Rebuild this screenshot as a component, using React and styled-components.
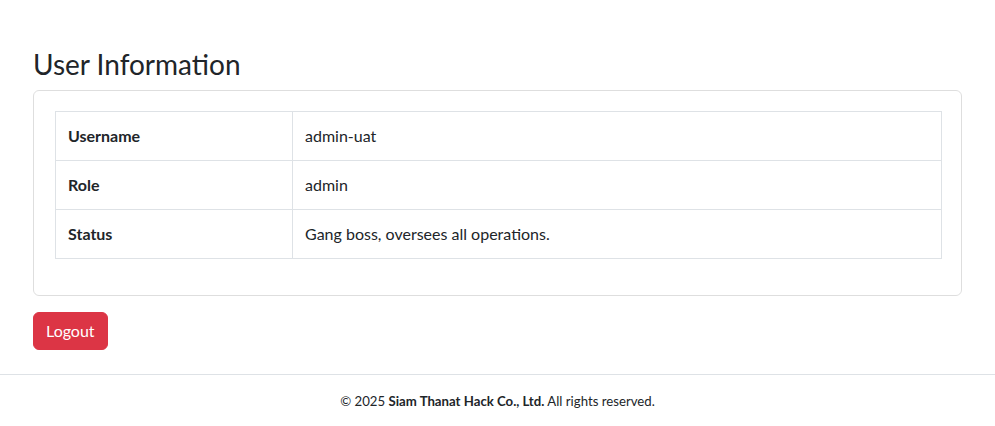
import React from 'react';
import styled, { createGlobalStyle } from 'styled-components';

const GlobalStyle = createGlobalStyle`
  * { box-sizing: border-box; }
  body {
    margin: 0;
    font-family: Lato, 'Noto Sans', sans-serif;
    font-size: 16px;
    line-height: 1.5;
    color: #212529;
    background: #fff;
  }
`;

const Page = styled.div`
  min-height: 100vh;
  display: flex;
  flex-direction: column;
`;

const Container = styled.main`
  padding: 48px 33px 0;
`;

const Title = styled.h3`
  margin: 0 0 8px;
  font-size: 28px;
  font-weight: 400;
  line-height: 1.2;
`;

const Card = styled.div`
  border: 1px solid rgba(0, 0, 0, 0.13);
  border-radius: 6px;
  padding: 20px 19px 20px 21px;
`;

const Table = styled.table`
  width: 100%;
  border-collapse: collapse;
  margin-bottom: 16px;
`;

const Row = styled.tr``;

const Cell = styled.td`
  border: 1px solid #dee2e6;
  padding: 12px;
  text-align: left;
  vertical-align: top;
  font-weight: ${(p) => (p.$head ? 700 : 400)};
  width: ${(p) => (p.$head ? '237px' : 'auto')};
`;

const LogoutButton = styled.button`
  margin-top: 16px;
  font-family: inherit;
  font-size: 16px;
  line-height: 24px;
  padding: 6px 12px;
  color: #fff;
  background: #dc3545;
  border: 1px solid #dc3545;
  border-radius: 6px;
  cursor: pointer;
`;

const Footer = styled.footer`
  margin-top: 24px;
  border-top: 1px solid #dee2e6;
  padding: 16px 0;
  text-align: center;
  font-size: 13.2px;
  line-height: 21px;
`;

const rows = [
  ['Username', 'admin-uat'],
  ['Role', 'admin'],
  ['Status', 'Gang boss, oversees all operations.'],
];

const App = () => {
  return (
    <Page>
      <GlobalStyle />
      <Container>
        <Title>User Information</Title>
        <Card>
          <Table>
            <tbody>
              {rows.map(([k, v]) => (
                <Row key={k}>
                  <Cell as="th" $head>{k}</Cell>
                  <Cell>{v}</Cell>
                </Row>
              ))}
            </tbody>
          </Table>
        </Card>
        <LogoutButton>Logout</LogoutButton>
      </Container>
      <Footer>
        © 2025 <strong>Siam Thanat Hack Co., Ltd.</strong> All rights reserved.
      </Footer>
    </Page>
  );
};

export default App;
